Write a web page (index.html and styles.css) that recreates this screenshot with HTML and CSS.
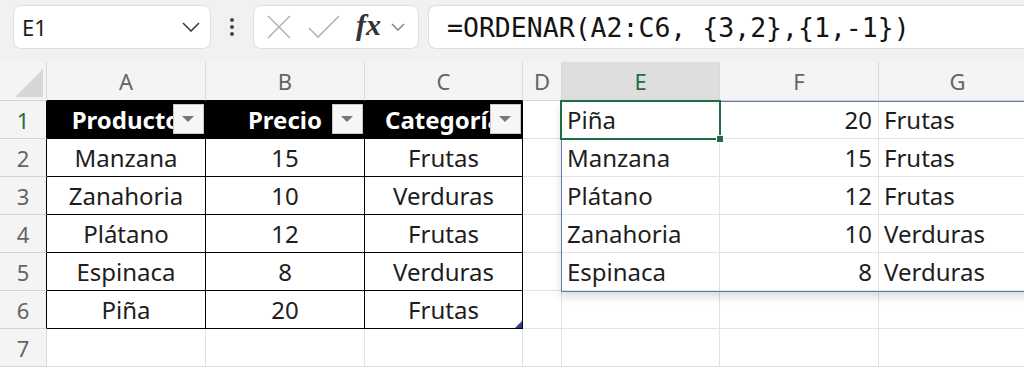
FILE: index.html
```html
<!DOCTYPE html>
<html>
  <head>
    <meta charset="UTF-8" />
    <meta name="viewport" content="width=device-width,initial-scale=1" />
    <title>Ordenar</title>
    <link rel="stylesheet" href="styles.css">
  </head>
  <body>
    <header class="toolbar">
      <div class="namebox">
        <span>E1</span>
        <svg class="chev" width="18" height="10" viewBox="0 0 18 10"><path d="M1 1 L9 9 L17 1" /></svg>
      </div>
      <div class="dots"><i></i><i></i><i></i></div>
      <div class="fxbox">
        <svg width="26" height="26" viewBox="0 0 26 26" class="ico"><path d="M2 2 L24 24 M24 2 L2 24" /></svg>
        <svg width="32" height="26" viewBox="0 0 32 26" class="ico"><path d="M1 14 L10 23 L31 2" /></svg>
        <span class="fx">fx</span>
        <svg class="chev small" width="14" height="8" viewBox="0 0 14 8"><path d="M1 1 L7 7 L13 1" /></svg>
      </div>
      <div class="formula">=ORDENAR(A2:C6, {3,2},{1,-1})</div>
    </header>

    <main class="sheet">
      <!-- column headers -->
      <div class="corner"><span class="tri"></span></div>
      <div class="colhead tb">A</div>
      <div class="colhead tb">B</div>
      <div class="colhead tb">C</div>
      <div class="colhead">D</div>
      <div class="colhead active">E</div>
      <div class="colhead">F</div>
      <div class="colhead">G</div>

      <!-- row 1 -->
      <div class="rowhead active tbl">1</div>
      <div class="cell th">Producto<span class="filter"></span></div>
      <div class="cell th">Precio<span class="filter"></span></div>
      <div class="cell th">Categoría<span class="filter"></span></div>
      <div class="cell"></div>
      <div class="cell left">Piña
        <div class="spill"></div>
        <div class="select"><span class="handle"></span></div>
      </div>
      <div class="cell right">20</div>
      <div class="cell left">Frutas</div>

      <!-- row 2 -->
      <div class="rowhead tbl">2</div>
      <div class="cell td">Manzana</div>
      <div class="cell td">15</div>
      <div class="cell td">Frutas</div>
      <div class="cell"></div>
      <div class="cell left">Manzana</div>
      <div class="cell right">15</div>
      <div class="cell left">Frutas</div>

      <!-- row 3 -->
      <div class="rowhead tbl">3</div>
      <div class="cell td">Zanahoria</div>
      <div class="cell td">10</div>
      <div class="cell td">Verduras</div>
      <div class="cell"></div>
      <div class="cell left">Plátano</div>
      <div class="cell right">12</div>
      <div class="cell left">Frutas</div>

      <!-- row 4 -->
      <div class="rowhead tbl">4</div>
      <div class="cell td">Plátano</div>
      <div class="cell td">12</div>
      <div class="cell td">Frutas</div>
      <div class="cell"></div>
      <div class="cell left">Zanahoria</div>
      <div class="cell right">10</div>
      <div class="cell left">Verduras</div>

      <!-- row 5 -->
      <div class="rowhead tbl">5</div>
      <div class="cell td">Espinaca</div>
      <div class="cell td">8</div>
      <div class="cell td">Verduras</div>
      <div class="cell"></div>
      <div class="cell left">Espinaca</div>
      <div class="cell right">8</div>
      <div class="cell left">Verduras</div>

      <!-- row 6 -->
      <div class="rowhead tbl">6</div>
      <div class="cell td">Piña</div>
      <div class="cell td">20</div>
      <div class="cell td last">Frutas<span class="resize"></span></div>
      <div class="cell"></div>
      <div class="cell"></div>
      <div class="cell"></div>
      <div class="cell"></div>

      <!-- row 7 -->
      <div class="rowhead">7</div>
      <div class="cell"></div>
      <div class="cell"></div>
      <div class="cell"></div>
      <div class="cell"></div>
      <div class="cell"></div>
      <div class="cell"></div>
      <div class="cell"></div>
    </main>
  </body>
</html>
```

FILE: styles.css
```css
:root {
  --color-bar: rgb(241 241 241);
  --color-head: rgb(244 244 244);
  --color-grid: rgb(226 226 226);
  --color-text: rgb(30 30 30);
  --color-muted: rgb(100 100 100);
  --color-green: rgb(31 110 67);
  --color-spill: rgb(96 122 176);
  --font-family: "Noto Sans", "Open Sans", sans-serif;
}

* {
  box-sizing: border-box;
  margin: 0;
  padding: 0;
}

body {
  background-color: white;
  color: var(--color-text);
  font-family: var(--font-family);
  height: 372px;
  overflow: hidden;
  width: 1024px;
}

/* formula bar */

.toolbar {
  align-items: center;
  background-color: var(--color-bar);
  display: flex;
  height: 62px;
  padding: 5px 0 13px 13px;
}

.namebox,
.fxbox,
.formula {
  background-color: white;
  border: 1px solid rgb(222 222 222);
  border-radius: 8px;
  height: 44px;
}

.namebox {
  align-items: center;
  display: flex;
  font-size: 22px;
  justify-content: space-between;
  padding: 0 10px 0 8px;
  width: 198px;
}

.chev path,
.ico path {
  fill: none;
  stroke-width: 1.6;
}

.chev path {
  stroke: rgb(60 60 60);
}

.chev.small path {
  stroke: rgb(140 140 140);
}

.ico path {
  stroke: rgb(180 180 180);
}

.dots {
  align-items: center;
  display: flex;
  flex-direction: column;
  gap: 3px;
  width: 42px;
}

.dots i {
  background-color: rgb(70 70 70);
  border-radius: 50%;
  height: 4px;
  width: 4px;
}

.fxbox {
  align-items: center;
  display: flex;
  gap: 16px;
  padding: 0 6px 0 12px;
  width: 166px;
}

.fx {
  font-family: "Liberation Serif", serif;
  font-size: 30px;
  font-style: italic;
  font-weight: bold;
  color: rgb(50 50 50);
  margin-top: -4px;
  margin-right: -6px;
}

.formula {
  align-items: center;
  border-radius: 8px 0 0 8px;
  border-right: none;
  display: flex;
  flex: 1;
  font-family: "DejaVu Sans Mono", monospace;
  font-size: 26.5px;
  margin-left: 9px;
  padding-left: 18px;
  color: rgb(20 20 20);
}

/* grid */

.sheet {
  display: grid;
  grid-template-columns: 47px 159px 159px 158px 39px 158px 159px 158px;
  grid-template-rows: 39px repeat(7, 38px) 10px;
  width: 1037px;
}

.corner,
.colhead,
.rowhead {
  align-items: center;
  background-color: var(--color-head);
  color: var(--color-muted);
  display: flex;
  font-size: 22px;
  justify-content: center;
  border-right: 1px solid rgb(218 218 218);
  border-bottom: 1px solid rgb(212 212 212);
}

.corner {
  position: relative;
}

.tri {
  border-bottom: 28px solid rgb(214 214 214);
  border-left: 28px solid transparent;
  bottom: 3px;
  position: absolute;
  right: 3px;
}

.colhead.tb {
  border-bottom-color: black;
}

.rowhead.tbl {
  border-right-color: black;
}

.colhead.active {
  background-color: rgb(222 222 222);
  color: var(--color-green);
}

.rowhead.active {
  color: var(--color-green);
}

.cell {
  align-items: center;
  border-bottom: 1px solid var(--color-grid);
  border-right: 1px solid var(--color-grid);
  display: flex;
  font-size: 24px;
  overflow: hidden;
  white-space: nowrap;
}

.cell.th,
.cell.td {
  border-bottom-color: black;
  border-right-color: black;
  justify-content: center;
}

.cell.th {
  background-color: black;
  color: white;
  font-weight: bold;
  position: relative;
}

.filter {
  background-color: rgb(246 246 246);
  border: 1px solid rgb(200 200 200);
  height: 30px;
  position: absolute;
  right: 1px;
  top: 3px;
  width: 31px;
}

.filter::after {
  border-left: 6px solid transparent;
  border-right: 6px solid transparent;
  border-top: 6px solid rgb(120 120 120);
  content: "";
  left: 8px;
  position: absolute;
  top: 11px;
}

.cell.last {
  position: relative;
  overflow: visible;
}

.resize {
  border-bottom: 7px solid rgb(50 60 140);
  border-left: 7px solid transparent;
  bottom: 0;
  position: absolute;
  right: 0;
}

.cell.left {
  padding-left: 5px;
}

.cell.right {
  justify-content: flex-end;
  padding-right: 6px;
}

/* selection and spill range */

.cell.left:has(.spill) {
  overflow: visible;
  position: relative;
}

.spill {
  border: 1px solid var(--color-spill);
  box-shadow: 0 5px 9px rgb(0 0 0 / 14%);
  height: 191px;
  left: -1px;
  pointer-events: none;
  position: absolute;
  top: 0;
  width: 480px;
}

.select {
  border: 2px solid var(--color-green);
  height: 40px;
  left: -2px;
  position: absolute;
  top: -1px;
  width: 161px;
}

.handle {
  background-color: var(--color-green);
  border: 1px solid white;
  bottom: -5px;
  height: 8px;
  position: absolute;
  right: -5px;
  width: 8px;
}
```
